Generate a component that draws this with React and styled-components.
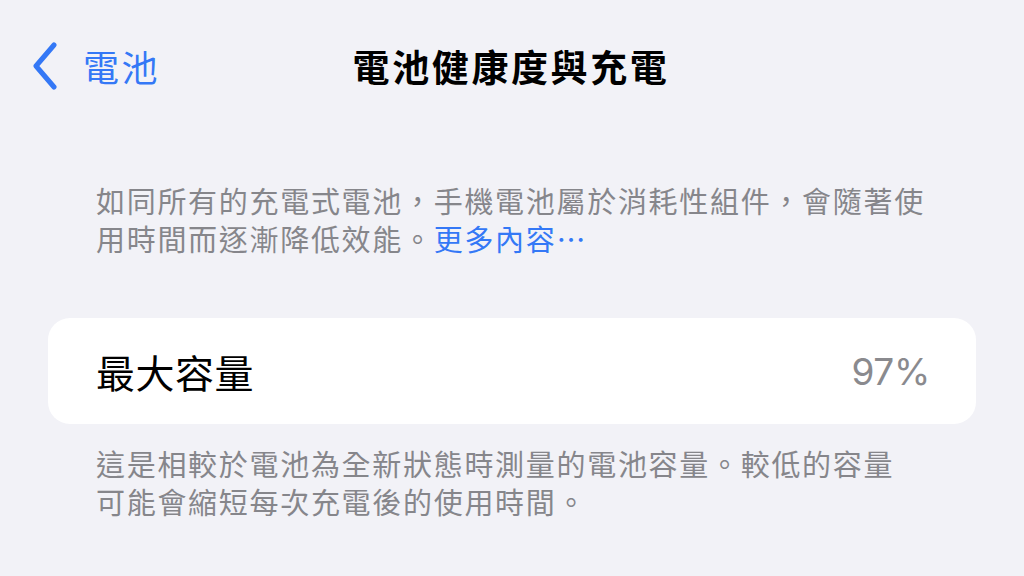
import React from 'react'
import styled, { createGlobalStyle } from 'styled-components'

const GlobalStyle = createGlobalStyle`
  html, body {
    margin: 0;
    background: #f2f2f7;
  }
  body {
    font-family: "Noto Sans CJK TC", "Inter", "Noto Sans", sans-serif;
    -webkit-font-smoothing: antialiased;
  }
`

const Screen = styled.div`
  width: 1024px;
  height: 576px;
  overflow: hidden;
  background: #f2f2f7;
  padding: 0 48px;
  box-sizing: border-box;
`

const NavBar = styled.header`
  height: 132px;
  display: grid;
  grid-template-columns: 1fr auto 1fr;
  align-items: center;
  margin: 0 -48px;
  padding: 0 33px 0 31px;
`

const BackLink = styled.a`
  display: flex;
  align-items: center;
  gap: 24px;
  color: #3478f6;
  text-decoration: none;
  font-size: 36px;
  letter-spacing: 2.5px;
  line-height: 44px;
  svg {
    display: block;
  }
`

const Title = styled.h1`
  margin: 0;
  font-size: 37px;
  font-weight: 700;
  letter-spacing: 2.6px;
  color: #000;
  line-height: 44px;
`

const Note = styled.p`
  margin: ${p => p.$top || 0}px 0 0;
  padding: 0 48px;
  max-width: ${p => p.$width || 832}px;
  font-size: 29px;
  letter-spacing: 1.7px;
  line-height: 38px;
  color: #86868b;
`

const NoteText = styled.span`
  color: #86868b;
`

const MoreLink = styled.a`
  color: #3478f6;
  text-decoration: none;
`

const Card = styled.div`
  margin-top: 61px;
  height: 106px;
  background: #fff;
  border-radius: 22px;
  display: flex;
  align-items: center;
  justify-content: space-between;
  padding: 0 46px 0 48px;
`

const Label = styled.span`
  font-size: 39px;
  letter-spacing: 0.5px;
  color: #000;
`

const Value = styled.span`
  font-family: "Inter", "Liberation Sans", sans-serif;
  font-size: 37px;
  color: #8a8a8e;
  letter-spacing: -0.3px;
`

function Chevron() {
  return (
    <svg width="28" height="48" viewBox="0 0 28 48">
      <path d="M23 3 L5 24 L23 45" fill="none" stroke="#3478f6" strokeWidth="5" strokeLinecap="round" strokeLinejoin="round" />
    </svg>
  )
}

export default function App() {
  return (
    <>
      <GlobalStyle />
      <Screen>
        <NavBar>
          <BackLink href="#back">
            <Chevron />
            <span>電池</span>
          </BackLink>
          <Title>電池健康度與充電</Title>
          <div />
        </NavBar>
        <Note $top={49}>
          <NoteText>如同所有的充電式電池，手機電池屬於消耗性組件，會隨著使用時間而逐漸降低效能。</NoteText>
          <MoreLink href="#more">更多內容⋯</MoreLink>
        </Note>
        <Card>
          <Label>最大容量</Label>
          <Value>97%</Value>
        </Card>
        <Note $top={20} $width={810}>
          這是相較於電池為全新狀態時測量的電池容量。較低的容量可能會縮短每次充電後的使用時間。
        </Note>
      </Screen>
    </>
  )
}
